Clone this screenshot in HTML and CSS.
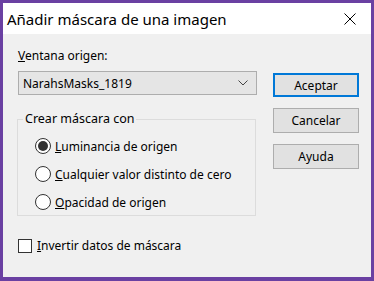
FILE: index.html
```html
<!DOCTYPE html>
<html>
    <head>
        <meta charset="utf-8" />
        <title>Añadir máscara de una imagen</title>
        <link rel="stylesheet" href="styles.css">
    </head>
    <body>
        <div class="window">
            <div class="titlebar">
                <span class="title">Añadir máscara de una imagen</span>
                <svg class="close" width="12" height="12" viewBox="0 0 12 12">
                    <path d="M0.5 0.5 L11.5 11.5 M11.5 0.5 L0.5 11.5" stroke="#000" stroke-width="1" fill="none" />
                </svg>
            </div>
            <div class="content">
                <div class="left">
                    <div class="label"><u>V</u>entana origen:</div>
                    <div class="select">
                        <span>NarahsMasks_1819</span>
                        <svg class="chevron" width="10" height="6" viewBox="0 0 10 6">
                            <path d="M0.5 0.5 L5 5 L9.5 0.5" stroke="#444" stroke-width="1" fill="none" />
                        </svg>
                    </div>
                    <fieldset class="group">
                        <legend>Crear máscara con</legend>
                        <div class="radio-row">
                            <span class="radio checked"></span>
                            <span><u>L</u>uminancia de origen</span>
                        </div>
                        <div class="radio-row">
                            <span class="radio"></span>
                            <span><u>C</u>ualquier valor distinto de cero</span>
                        </div>
                        <div class="radio-row">
                            <span class="radio"></span>
                            <span><u>O</u>pacidad de origen</span>
                        </div>
                    </fieldset>
                    <div class="check-row">
                        <span class="checkbox"></span>
                        <span><u>I</u>nvertir datos de máscara</span>
                    </div>
                </div>
                <div class="right">
                    <div class="button default">Aceptar</div>
                    <div class="button">Cancelar</div>
                    <div class="button">Ayuda</div>
                </div>
            </div>
        </div>
    </body>
</html>
```
FILE: styles.css
```css
body {
    margin: 0;
    font-family: "Noto Sans", "Liberation Sans", sans-serif;
    font-size: 12px;
    color: #000000;
}
.window {
    width: 374px;
    height: 281px;
    box-sizing: border-box;
    border: 3px solid #6a40a2;
    border-bottom-width: 4px;
    background: #f0f0f0;
    display: flex;
    flex-direction: column;
}
.titlebar {
    height: 31px;
    background: #ffffff;
    display: flex;
    align-items: center;
    justify-content: space-between;
    padding: 0 15px 0 4px;
    flex-shrink: 0;
}
.title {
    font-size: 15px;
    line-height: 20px;
    margin-top: 1px;
}
.close {
    display: block;
}
.content {
    flex: 1;
    display: flex;
    padding: 14px 0 0 13px;
}
.left {
    width: 241px;
    display: flex;
    flex-direction: column;
}
.label {
    line-height: 16px;
    margin-left: 2px;
}
.select {
    margin-top: 7px;
    margin-left: 2px;
    height: 24px;
    box-sizing: border-box;
    border: 1px solid #adadad;
    background: #e5e5e5;
    display: flex;
    align-items: center;
    justify-content: space-between;
    padding: 0 8px 0 4px;
}
.chevron {
    display: block;
}
.group {
    margin: 17px 0 0 1px;
    width: 239px;
    height: 104px;
    box-sizing: border-box;
    border: 1px solid #dcdcdc;
    padding: 6px 0 0 0;
}
.group legend {
    padding: 0 2px;
    margin-left: 5px;
    font-size: 12.5px;
    line-height: 14px;
}
.radio-row {
    display: flex;
    align-items: center;
    gap: 4px;
    height: 28px;
    padding-left: 17px;
}
.radio {
    width: 14px;
    height: 14px;
    border: 1px solid #333333;
    border-radius: 50%;
    background: #ffffff;
    display: flex;
    align-items: center;
    justify-content: center;
}
.radio.checked::after {
    content: "";
    width: 10px;
    height: 10px;
    border-radius: 50%;
    background: #333333;
}
.check-row {
    margin: 21px 0 0 2px;
    display: flex;
    align-items: center;
    gap: 5px;
}
.checkbox {
    width: 12px;
    height: 12px;
    border: 1px solid #333333;
    background: #ffffff;
}
.right {
    margin-left: 16px;
    padding-top: 25px;
    display: flex;
    flex-direction: column;
    gap: 11px;
}
.button {
    width: 86px;
    height: 25px;
    box-sizing: border-box;
    border: 1px solid #adadad;
    background: #e1e1e1;
    display: flex;
    align-items: center;
    justify-content: center;
}
.button.default {
    border: 2px solid #0078d7;
    height: 24px;
}
```
